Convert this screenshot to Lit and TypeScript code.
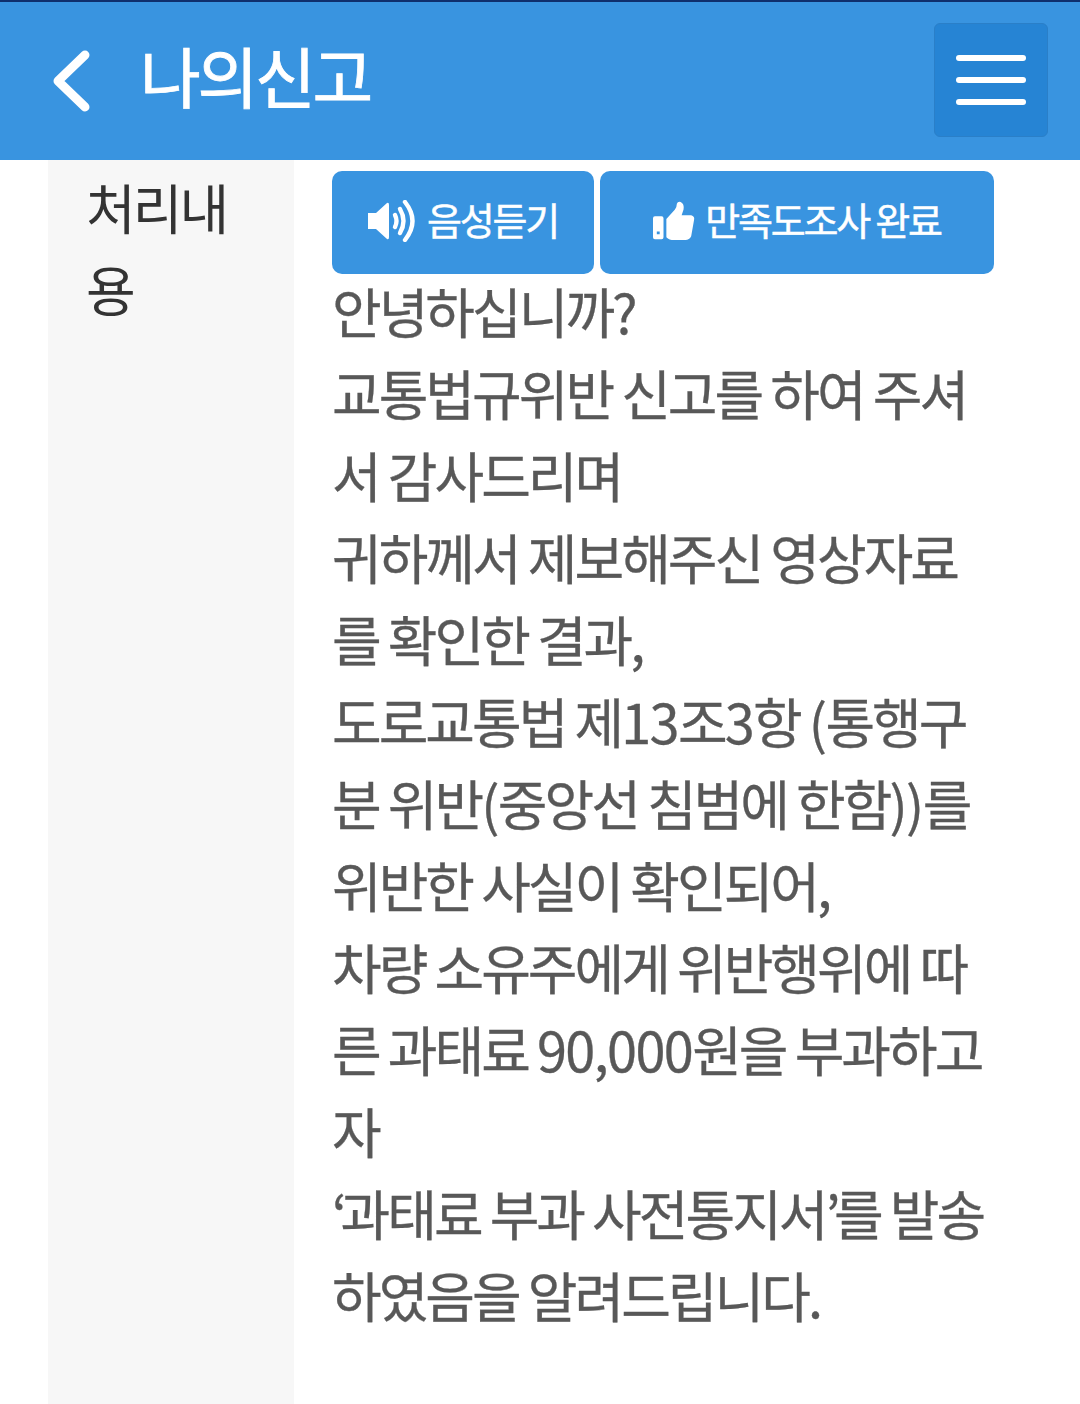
import { LitElement, html, css } from "lit";
import { customElement } from "lit/decorators.js";

const lines = [
  html`안녕하십니까?`,
  html`교통법규위반 신고를 하여 주셔`,
  html`서 감사드리며`,
  html`귀하께서 제보해주신 영상자료`,
  html`를 확인한 결과,`,
  html`도로교통법 제<span class="n">13</span>조<span class="n">3</span>항 <span class="n">(</span>통행구`,
  html`분 위반<span class="n">(</span>중앙선 침범에 한함<span class="n">))</span>를`,
  html`위반한 사실이 확인되어,`,
  html`차량 소유주에게 위반행위에 따`,
  html`른 과태료 <span class="n">90,000</span>원을 부과하고`,
  html`자`,
  html`<span class="q">‘</span>과태료 부과 사전통지서<span class="q">’</span>를 발송`,
  html`하였음을 알려드립니다.`,
];

@customElement("app-root")
export class AppRoot extends LitElement {
  static styles = css`
    :host {
      display: block;
      width: 1080px;
      height: 1404px;
      overflow: hidden;
      background: #fff;
      font-family: "Noto Sans CJK KR", "Noto Sans", sans-serif;
    }
    .top {
      height: 160px;
      box-sizing: border-box;
      background: #3994e0;
      border-top: 2px solid #0f2f6e;
      display: flex;
      align-items: center;
      padding: 0 32px 0 52px;
    }
    .back { width: 40px; height: 62px; margin-top: 0; flex: none; }
    .title {
      margin-left: 48px;
      margin-bottom: 14px;
      color: #fff;
      font-size: 66px;
      line-height: 80px;
      letter-spacing: -3.2px;
      flex: 1;
      -webkit-text-stroke: 0.8px #fff;
    }
    .menu {
      width: 114px;
      height: 114px;
      box-sizing: border-box;
      background: #2684d4;
      border: 1px solid #2a7fc8;
      border-radius: 6px;
      display: flex;
      flex-direction: column;
      justify-content: center;
      align-items: center;
      gap: 16px;
      margin-top: -2px;
    }
    .menu span {
      display: block;
      width: 70px;
      height: 6px;
      background: #fff;
      border-radius: 3px;
    }
    .body {
      display: grid;
      grid-template-columns: 246px 1fr;
      margin-left: 48px;
      height: 1244px;
    }
    .label {
      background: #f7f7f7;
      box-sizing: border-box;
      padding: 6px 40px 0 38px;
      color: #333;
      font-size: 54px;
      line-height: 82px;
      letter-spacing: -2.9px;
      word-break: break-all;
    }
    .content { padding: 11px 0 0 38px; }
    .btns { display: flex; gap: 6px; height: 103px; }
    .btn {
      box-sizing: border-box;
      height: 103px;
      background: #3994e0;
      border-radius: 10px;
      color: #fff;
      display: flex;
      align-items: center;
      justify-content: center;
      font-size: 38px;
      letter-spacing: -2.2px;
    }
    .btn span {
      margin-top: -8px;
      -webkit-text-stroke: 0.5px #fff;
    }
    .b1 { width: 262px; gap: 11px; }
    .b2 { width: 394px; gap: 10px; }
    .b1 svg, .b2 svg { margin-top: -4px; }
    .text {
      color: #585858;
      font-size: 54px;
      line-height: 82px;
      letter-spacing: -3px;
      white-space: nowrap;
      margin-top: -4px;
      -webkit-text-stroke: 0.3px #585858;
    }
    .text div { height: 82px; }
    .n { letter-spacing: -1.6px; }
    .q { letter-spacing: -6.5px; }
  `;

  render() {
    return html`
      <div class="top">
        <svg class="back" viewBox="0 0 40 62" fill="none" stroke="#fff" stroke-width="9" stroke-linecap="round" stroke-linejoin="round">
          <path d="M33 5 L6 31 L33 57" />
        </svg>
        <div class="title">나의신고</div>
        <div class="menu"><span></span><span></span><span></span></div>
      </div>
      <div class="body">
        <div class="label">처리내용</div>
        <div class="content">
          <div class="btns">
            <div class="btn b1">
              <svg width="48" height="42" viewBox="0 0 48 42" fill="#fff">
                <path d="M0 13 H8 L19 3 Q21 2 21 5 V37 Q21 40 19 39 L8 29 H0 Z" />
                <g fill="none" stroke="#fff" stroke-width="4.4" stroke-linecap="round">
                  <path d="M27 15 Q30 21 27 27" />
                  <path d="M32 9 Q39 21 32 33" />
                  <path d="M37 2 Q52 21 37 40" />
                </g>
              </svg>
              <span>음성듣기</span>
            </div>
            <div class="btn b2">
              <svg width="42" height="42" viewBox="0 0 44 42" fill="#fff">
                <path d="M0 18 Q0 16 2 16 H9 Q11 16 11 18 V38 Q11 40 9 40 H2 Q0 40 0 38 Z M4 32 V35 H7 V32 Z" fill-rule="evenodd" />
                <path d="M14 19 L23 9 Q25 6 25 3 Q26 0 29 1 Q33 3 32 9 L30 15 H40 Q44 16 43 20 L40 37 Q38 41 34 41 H22 Q17 41 14 38 Z" />
              </svg>
              <span>만족도조사 완료</span>
            </div>
          </div>
          <div class="text">${lines.map((l) => html`<div>${l}</div>`)}</div>
        </div>
      </div>
    `;
  }
}
